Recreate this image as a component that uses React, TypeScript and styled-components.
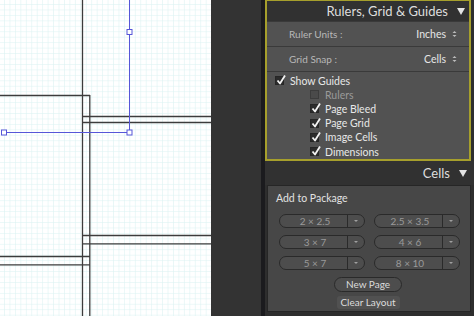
import styled, { createGlobalStyle } from "styled-components";

const GlobalStyle = createGlobalStyle`
  html, body {
    margin: 0;
    padding: 0;
    background: #2e2e2e;
  }
  body {
    font-family: "Lato", "Open Sans", sans-serif;
  }
`;

const Wrapper = styled.div`
  display: flex;
  width: 474px;
  height: 316px;
  overflow: hidden;
  background: #2e2e2e;
`;

const Canvas = styled.div`
  width: 211px;
  height: 316px;
  background: #ffffff;
  flex-shrink: 0;
`;

const Gutter = styled.div`
  width: 50px;
  background: #333333;
  flex-shrink: 0;
`;

const Divider = styled.div`
  width: 4px;
  background: #1b1b1e;
  flex-shrink: 0;
`;

const Panel = styled.div`
  flex: 1;
  display: flex;
  flex-direction: column;
  background: #2e2e2e;
  color: #dcdcdc;
`;

const Highlight = styled.div`
  margin-right: 4px;
  border: 2px solid #a69f2c;
  border-top-width: 1.5px;
  display: flex;
  flex-direction: column;
`;

const SectionHeader = styled.div<{ tall?: boolean }>`
  height: ${(p) => (p.tall ? "24px" : "20px")};
  display: flex;
  align-items: center;
  justify-content: flex-end;
  gap: 9px;
  padding-right: ${(p) => (p.tall ? "8px" : "4px")};
  background: #313131;
  font-size: 13px;
  color: #dedede;
`;

const Triangle = styled.span`
  width: 0;
  height: 0;
  border-left: 4px solid transparent;
  border-right: 4px solid transparent;
  border-top: 7px solid #e4e4e4;
  margin-top: 1px;
`;

const SelectRow = styled.div`
  height: 24px;
  display: flex;
  align-items: center;
  padding: 0 12px 0 22px;
  background: #525252;
  border-top: 1px solid #3a3a3a;
  font-size: 10px;
`;

const SelectLabel = styled.span`
  flex: 1;
  color: #b8b8b8;
`;

const SelectValue = styled.span`
  font-size: 10.5px;
  color: #e6e6e6;
  margin-right: 6px;
`;

const Checklist = styled.div`
  background: #525252;
  border-top: 1px solid #3a3a3a;
  padding: 1.5px 0 0 8px;
  display: flex;
  flex-direction: column;
`;

const CheckRow = styled.div<{ indent?: boolean; dim?: boolean }>`
  height: 14.2px;
  display: flex;
  align-items: center;
  gap: 6px;
  padding-left: ${(p) => (p.indent ? "35px" : "0")};
  font-size: 10.5px;
  color: ${(p) => (p.dim ? "#9a9a9a" : "#e8e8e8")};
`;

const Box = styled.span<{ dim?: boolean }>`
  position: relative;
  width: 7px;
  height: 7px;
  background: ${(p) => (p.dim ? "#4a4a4a" : "#2c2c2c")};
  border: 1px solid ${(p) => (p.dim ? "#3c3c3c" : "#262626")};
  flex-shrink: 0;
`;

const Tick = styled.svg`
  position: absolute;
  left: 0px;
  top: -3px;
`;

const CellsBox = styled.div`
  margin: 0 4px 0 2px;
  background: #474747;
  border: 1px solid #262626;
  padding: 6px 10px 3px 8px;
  display: flex;
  flex-direction: column;
  height: 127px;
  box-sizing: border-box;
`;

const BoxTitle = styled.div`
  font-size: 10.5px;
  color: #e2e2e2;
  margin-bottom: 10.5px;
`;

const ButtonGrid = styled.div`
  display: grid;
  grid-template-columns: 86px 86px;
  column-gap: 9px;
  row-gap: 7px;
  padding-left: 3px;
`;

const Split = styled.div`
  display: flex;
  height: 14px;
  box-sizing: border-box;
  border: 1px solid #2a2a2a;
  border-radius: 8px;
  background: #4d4d4d;
  overflow: hidden;
`;

const SplitMain = styled.span`
  flex: 1;
  display: flex;
  align-items: center;
  justify-content: center;
  font-size: 10px;
  color: #9a9a9a;
  padding-left: 3px;
`;

const SplitDrop = styled.span`
  width: 16px;
  border-left: 1px solid #2a2a2a;
  display: flex;
  align-items: center;
  justify-content: center;
`;

const Caret = styled.span`
  width: 0;
  height: 0;
  border-left: 2px solid transparent;
  border-right: 2px solid transparent;
  border-top: 2px solid #a0a0a0;
`;

const Actions = styled.div`
  display: flex;
  flex-direction: column;
  align-items: center;
  gap: 4px;
  margin-top: 6.5px;
`;

const PillButton = styled.div<{ flat?: boolean }>`
  height: ${(p) => (p.flat ? "13px" : "15px")};
  width: ${(p) => (p.flat ? "63px" : "68px")};
  box-sizing: border-box;
  display: flex;
  align-items: center;
  justify-content: center;
  border: ${(p) => (p.flat ? "none" : "1px solid #2a2a2a")};
  border-radius: ${(p) => (p.flat ? "3px" : "8px")};
  background: ${(p) => (p.flat ? "#515151" : "#4d4d4d")};
  font-size: 10px;
  color: #dcdcdc;
`;

const UpDown = () => (
  <svg width="5" height="8" viewBox="0 0 5 8">
    <path d="M0.5 3 L2.5 1 L4.5 3 Z" fill="#bdbdbd" />
    <path d="M0.5 5 L2.5 7 L4.5 5 Z" fill="#bdbdbd" />
  </svg>
);

function Check({ on, dim }: { on: boolean; dim?: boolean }) {
  return (
    <Box dim={dim}>
      {on && (
        <Tick width="10" height="11" viewBox="0 0 10 11">
          <path
            d="M1.5 6.5 L4 9.5 L9 1.5"
            stroke="#f2f2f2"
            strokeWidth="1.8"
            fill="none"
            strokeLinejoin="round"
          />
        </Tick>
      )}
    </Box>
  );
}

// grid + page guides drawn as one picture
function PageCanvas() {
  const line = "#3c3c3c";
  const blue = "#5656d8";
  return (
    <svg width="211" height="316" viewBox="0 0 211 316">
      <defs>
        <pattern id="minor" width="5.45" height="5.45" patternUnits="userSpaceOnUse" x="-0.5" y="-0.5">
          <path d="M5.45 0 V5.45 M0 5.45 H5.45" stroke="#d8f1f1" strokeWidth="1" fill="none" />
        </pattern>
      </defs>
      <rect width="211" height="316" fill="#fff" />
      <rect width="211" height="316" fill="url(#minor)" />
      <g stroke={line} strokeWidth="1.3" fill="none">
        <path d="M82.5 0 V316" />
        <path d="M89.8 95 V316" />
        <path d="M0 95.5 H90" />
        <path d="M82 116.5 H211" />
        <path d="M82 122.5 H211" />
        <path d="M82 235.5 H211" />
        <path d="M82 243.8 H211" />
        <path d="M0 256.5 H90" />
        <path d="M0 264.8 H90" />
      </g>
      <g stroke={blue} strokeWidth="1" fill="none">
        <path d="M129.5 0 V132" />
        <path d="M4 132.5 H129" />
      </g>
      <g stroke={blue} strokeWidth="1" fill="#fff">
        <rect x="127" y="29.5" width="5" height="5" />
        <rect x="127" y="130" width="5" height="5" />
        <rect x="1.5" y="130" width="5" height="5" />
      </g>
    </svg>
  );
}

const sizes = ["2 × 2.5", "2.5 × 3.5", "3 × 7", "4 × 6", "5 × 7", "8 × 10"];

const guides = [
  { label: "Rulers", on: false },
  { label: "Page Bleed", on: true },
  { label: "Page Grid", on: true },
  { label: "Image Cells", on: true },
  { label: "Dimensions", on: true },
];

function App() {
  return (
    <Wrapper>
      <GlobalStyle />
      <Canvas>
        <PageCanvas />
      </Canvas>
      <Gutter />
      <Divider />
      <Panel>
        <Highlight>
          <SectionHeader>
            Rulers, Grid &amp; Guides
            <Triangle />
          </SectionHeader>
          <SelectRow>
            <SelectLabel>Ruler Units :</SelectLabel>
            <SelectValue>Inches</SelectValue>
            <UpDown />
          </SelectRow>
          <SelectRow>
            <SelectLabel>Grid Snap :</SelectLabel>
            <SelectValue>Cells</SelectValue>
            <UpDown />
          </SelectRow>
          <Checklist>
            <CheckRow>
              <Check on />
              Show Guides
            </CheckRow>
            {guides.map((g) => (
              <CheckRow key={g.label} indent dim={!g.on}>
                <Check on={g.on} dim={!g.on} />
                {g.label}
              </CheckRow>
            ))}
          </Checklist>
        </Highlight>
        <SectionHeader tall>
          Cells
          <Triangle />
        </SectionHeader>
        <CellsBox>
          <BoxTitle>Add to Package</BoxTitle>
          <ButtonGrid>
            {sizes.map((s) => (
              <Split key={s}>
                <SplitMain>{s}</SplitMain>
                <SplitDrop>
                  <Caret />
                </SplitDrop>
              </Split>
            ))}
          </ButtonGrid>
          <Actions>
            <PillButton>New Page</PillButton>
            <PillButton flat>Clear Layout</PillButton>
          </Actions>
        </CellsBox>
      </Panel>
    </Wrapper>
  );
}

export default App;
